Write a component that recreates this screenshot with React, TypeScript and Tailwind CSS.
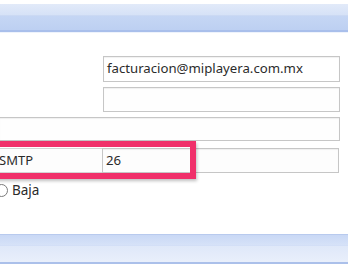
import React from "react";

export default function App() {
  return (
    <div
      className="relative w-[348px] h-[268px] overflow-hidden bg-white flex flex-col text-[#2b2b2b]"
      style={{ fontFamily: '"Noto Sans", "Open Sans", sans-serif' }}
    >
      {/* top bar */}
      <div className="h-[4px] shrink-0" />
      <div className="h-[28px] shrink-0 flex flex-col">
        <div className="h-[11px] bg-gradient-to-b from-[#e2eaf9] to-[#d6e2f7]" />
        <div className="h-[1px] bg-[#cbd9f3]" />
        <div className="flex-1 bg-gradient-to-b from-[#c5d6f4] to-[#bdd0f2]" />
        <div className="h-[2px] bg-[#a9bfeb]" />
      </div>
      <div className="h-[1px] bg-[#eef3fc] shrink-0" />

      <div className="h-[23px] shrink-0" />

      {/* row 1 */}
      <div className="flex shrink-0">
        <div className="w-[103px]" />
        <div className="w-[237px] h-[26px] border border-[#c6c6c6] bg-white shadow-[inset_0_1px_1px_rgba(0,0,0,0.06)] flex items-center pl-[3px] text-[13.2px]">
          facturacion@miplayera.com.mx
        </div>
      </div>

      <div className="h-[5px] shrink-0" />
      {/* row 2 */}
      <div className="flex shrink-0">
        <div className="w-[103px]" />
        <div className="w-[237px] h-[25px] border border-[#c6c6c6] bg-[#fefefe] shadow-[inset_0_1px_1px_rgba(0,0,0,0.06)]" />
      </div>

      <div className="h-[5px] shrink-0" />
      {/* row 3 */}
      <div className="flex shrink-0">
        <div className="w-[340px] h-[24px] border border-l-0 border-[#c6c6c6] bg-[#fefefe] shadow-[inset_0_1px_1px_rgba(0,0,0,0.06)]" />
      </div>

      <div className="h-[7px] shrink-0" />
      {/* row 4 */}
      <div className="flex shrink-0 h-[25px]">
        <div className="w-[103px] border-y border-[#d4d4d4] bg-[#fdfdfd] flex items-center text-[13px] -ml-[1px]">
          SMTP
        </div>
        <div className="w-[237px] border border-[#c6c6c6] bg-[#fdfdfd] shadow-[inset_0_1px_1px_rgba(0,0,0,0.06)] flex items-center pl-[3px] text-[13.2px]">
          26
        </div>
      </div>

      <div className="h-[9px] shrink-0" />
      {/* radio row */}
      <div className="flex items-center shrink-0 h-[16px] text-[13.5px]">
        <div className="-ml-[5px] w-[13px] h-[13px] rounded-full border border-[#7a7a7a] bg-white" />
        <span className="ml-[4px]">Baja</span>
      </div>

      <div className="flex-1" />

      {/* bottom bar */}
      <div className="h-[30px] shrink-0 flex flex-col">
        <div className="h-[1px] bg-[#b8caee]" />
        <div className="h-[10px] bg-gradient-to-b from-[#c9d8f5] to-[#d6e2f8]" />
        <div className="h-[1px] bg-[#d3dff7]" />
        <div className="flex-1 bg-gradient-to-b from-[#dfe8f9] to-[#e9effb]" />
        <div className="h-[2px] bg-[#abc0ea]" />
      </div>
      <div className="h-[4px] shrink-0" />

      {/* pink highlight */}
      <div className="absolute left-[-10px] top-[141px] w-[206px] h-[38px] border-[6px] border-[#f0306a] shadow-[1px_2px_3px_rgba(0,0,0,0.25)]" />
    </div>
  );
}
